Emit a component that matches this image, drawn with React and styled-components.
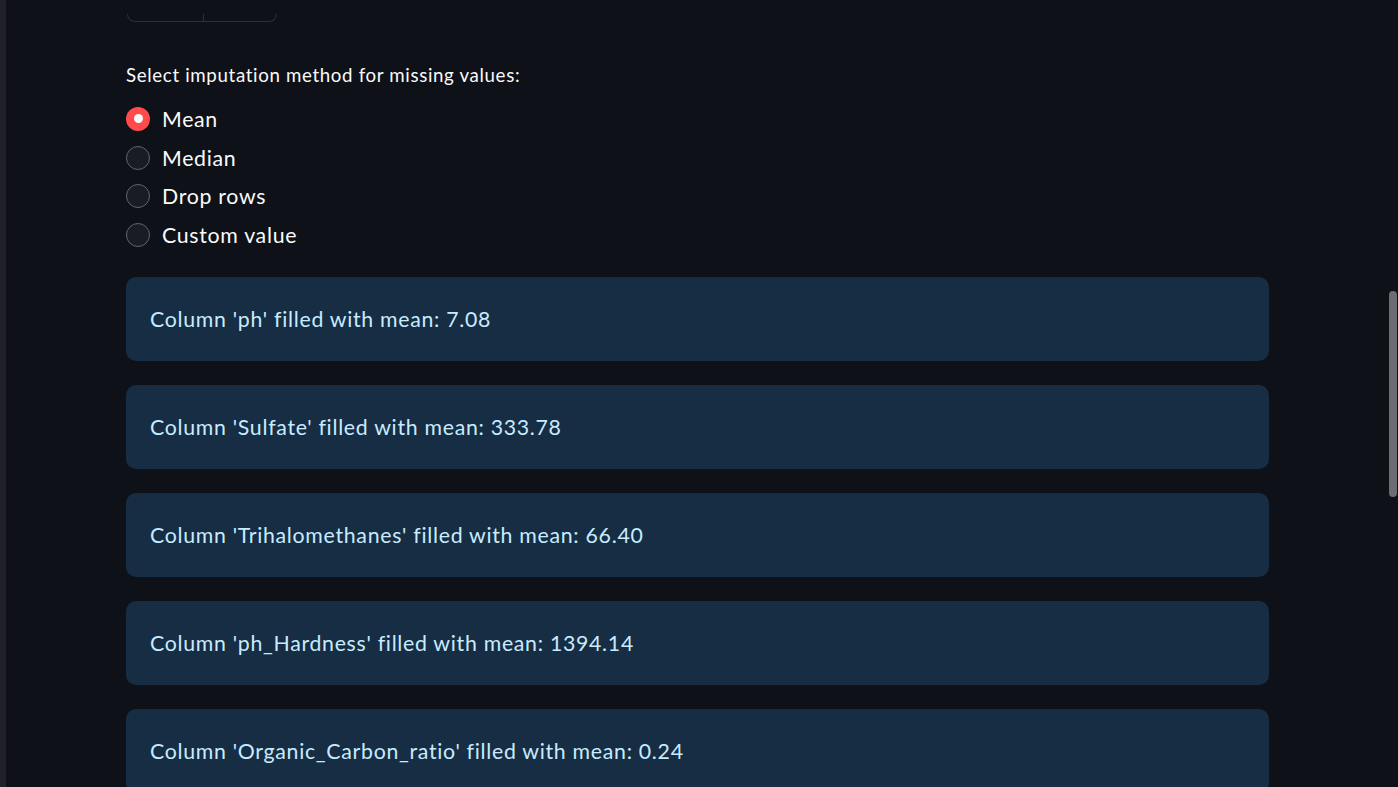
import React, { useState } from "react";
import styled, { createGlobalStyle } from "styled-components";

const Global = createGlobalStyle`
  html, body { margin: 0; padding: 0; background: #0e1117; height: 100%; overflow: hidden; }
  body { font-family: Lato, "Noto Sans", sans-serif; color: #fafafa; }
  #root { height: 100%; }
`;

const Page = styled.div`
  display: flex;
  height: 787px;
  overflow: hidden;
  position: relative;
`;

const SideEdge = styled.div`
  width: 6px;
  flex: 0 0 6px;
  background: #1f2028;
`;

const Main = styled.main`
  flex: 1;
  padding: 0 0 0 120px;
`;

const Column = styled.div`
  width: 1143px;
  display: flex;
  flex-direction: column;
`;

const ButtonGroupTail = styled.div`
  margin-top: 14px;
  width: 148px;
  height: 7px;
  margin-left: 1px;
  border: 1px solid #2e3038;
  border-top: none;
  border-radius: 0 0 9px 9px;
  display: flex;
`;

const GroupDivider = styled.div`
  width: 1px;
  margin-left: 75px;
  background: #2e3038;
`;

const Label = styled.div`
  margin-top: 40px;
  font-size: 18.7px;
  line-height: 26px;
  letter-spacing: 0.65px;
  color: #fafafa;
`;

const RadioList = styled.div`
  margin-top: 11.5px;
  display: flex;
  flex-direction: column;
`;

const RadioRow = styled.label`
  display: flex;
  align-items: center;
  gap: 12px;
  height: 38.8px;
  font-size: 21.3px;
  letter-spacing: 0.7px;
  color: #fafafa;
  cursor: pointer;
`;

const Circle = styled.span`
  box-sizing: border-box;
  width: 24px;
  height: 24px;
  border-radius: 50%;
  display: flex;
  align-items: center;
  justify-content: center;
  background: ${(p) => (p.$checked ? "#ff4b4b" : "#1a1c23")};
  border: ${(p) => (p.$checked ? "none" : "1.5px solid #63656c")};
  &::after {
    content: "";
    display: ${(p) => (p.$checked ? "block" : "none")};
    width: 9px;
    height: 9px;
    border-radius: 50%;
    background: #fafafa;
  }
`;

const Alerts = styled.div`
  margin-top: 22.5px;
  display: flex;
  flex-direction: column;
  gap: 24px;
`;

const InfoBox = styled.div`
  box-sizing: border-box;
  height: 84px;
  padding: 0 24px;
  display: flex;
  align-items: center;
  background: #172d43;
  border-radius: 10px;
  color: #c7ebff;
  font-size: 21.3px;
  letter-spacing: 0.7px;
`;

const ScrollThumb = styled.div`
  position: absolute;
  right: 1px;
  top: 291px;
  width: 8px;
  height: 206px;
  border-radius: 4px;
  background: #6c6d72;
`;

const options = ["Mean", "Median", "Drop rows", "Custom value"];
const fills = [
  ["ph", "7.08"],
  ["Sulfate", "333.78"],
  ["Trihalomethanes", "66.40"],
  ["ph_Hardness", "1394.14"],
  ["Organic_Carbon_ratio", "0.24"],
];

export default function App() {
  const [sel, setSel] = useState("Mean");
  return (
    <>
      <Global />
      <Page>
        <SideEdge />
        <Main>
          <Column>
            <ButtonGroupTail>
              <GroupDivider />
            </ButtonGroupTail>
            <Label>Select imputation method for missing values:</Label>
            <RadioList>
              {options.map((o) => (
                <RadioRow key={o} onClick={() => setSel(o)}>
                  <Circle $checked={sel === o} />
                  {o}
                </RadioRow>
              ))}
            </RadioList>
            <Alerts>
              {fills.map(([c, v]) => (
                <InfoBox key={c}>
                  Column '{c}' filled with mean: {v}
                </InfoBox>
              ))}
            </Alerts>
          </Column>
        </Main>
        <ScrollThumb />
      </Page>
    </>
  );
}
